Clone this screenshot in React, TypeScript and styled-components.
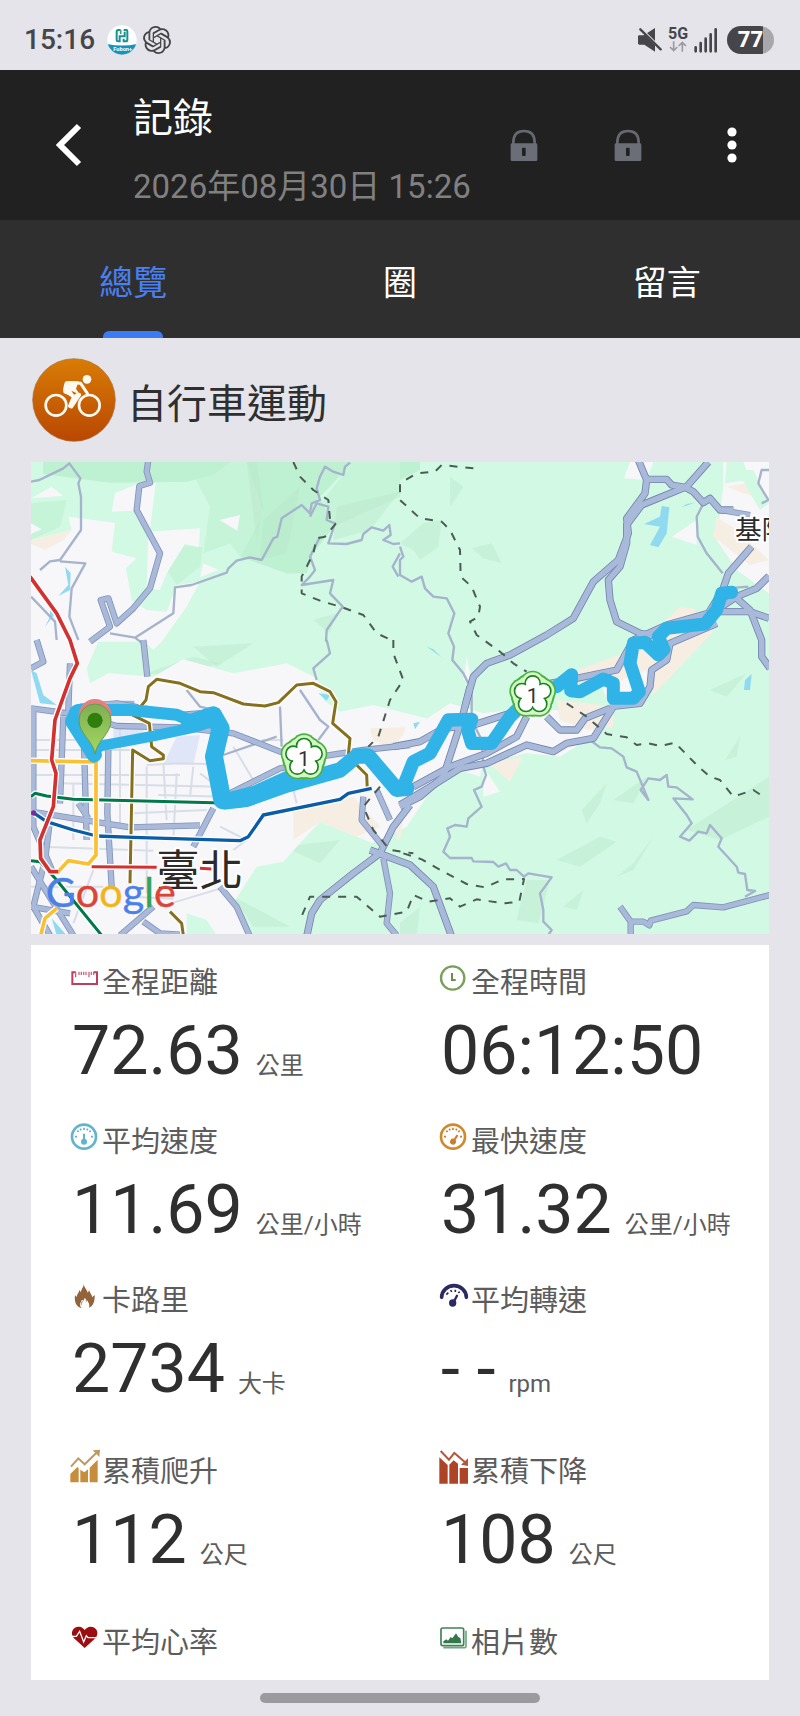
import React, { useState } from "react";
import styled, { createGlobalStyle } from "styled-components";

const latin = `Roboto, "Noto Sans CJK TC", sans-serif`;
const cjk = `"Noto Sans CJK TC", Roboto, sans-serif`;

const GlobalStyle = createGlobalStyle`
  *, *::before, *::after { box-sizing: border-box; }
  body { margin: 0; background: #e5e4ea; font-family: ${latin}; color: #2f2f2f; }
  button { border: 0; padding: 0; margin: 0; background: none; font: inherit; color: inherit; cursor: pointer; }
  svg { display: block; flex: none; }
  h1, h2, p, dl, dt, dd { margin: 0; font-weight: 400; }
`;

const Page = styled.div`
  min-height: 100vh;
  display: flex;
  flex-direction: column;
`;

/* ---------- status bar ---------- */

const StatusBar = styled.div`
  display: flex;
  align-items: center;
  justify-content: space-between;
  height: 70px;
  padding: 9px 26px 0 24px;
  color: #46464a;
`;

const StatusGroup = styled.div<{ $gap: number }>`
  display: flex;
  align-items: center;
  gap: ${(p) => p.$gap}px;
`;

const Clock = styled.time`
  font-size: 28px;
  line-height: 32px;
  font-weight: 500;
  margin-right: 6px;
`;

const Network = styled.div`
  display: flex;
  flex-direction: column;
  align-items: center;
  width: 22px;
  font-size: 16px;
  line-height: 14px;
  font-weight: 700;
`;

const Battery = styled.div`
  width: 47px;
  height: 28px;
  margin-left: 4px;
  border-radius: 14px;
  background: linear-gradient(90deg, #46464a 77%, #a8a7ac 77%);
  color: #fff;
  font-size: 22px;
  line-height: 28px;
  font-weight: 800;
  text-align: center;
`;

/* ---------- header ---------- */

const Header = styled.header`
  display: flex;
  align-items: center;
  height: 150px;
  padding-right: 16px;
  background: #212121;
  color: #fff;
`;

const BackButton = styled.button`
  display: grid;
  place-items: center;
  width: 133px;
  height: 100px;
  padding-left: 4px;
`;

const Titles = styled.div`
  flex: 1;
  display: flex;
  flex-direction: column;
  gap: 27px;
  padding-top: 7px;
  white-space: nowrap;
`;

const Title = styled.h1`
  font: 400 40px/50px ${cjk};
`;

const Stamp = styled.p`
  font-size: 33px;
  line-height: 40px;
  color: #808080;
`;

const ActionButton = styled.button`
  display: grid;
  place-items: center;
  width: 104px;
  height: 64px;
`;

/* ---------- tabs ---------- */

const Tabs = styled.nav`
  display: flex;
  height: 118px;
  background: #2f2f2f;
`;

const Tab = styled.button<{ $active: boolean }>`
  flex: 1;
  display: flex;
  flex-direction: column;
  align-items: center;
  justify-content: space-between;
  padding-top: 36px;
  font: 400 34px/50px ${cjk};
  color: ${(p) => (p.$active ? "#4a7ff0" : "#fff")};

  &::after {
    content: "";
    width: 60px;
    height: 7px;
    border-radius: 6px 6px 0 0;
    background: ${(p) => (p.$active ? "#3b7cf6" : "transparent")};
  }
`;

/* ---------- content ---------- */

const Activity = styled.section`
  display: flex;
  align-items: center;
  gap: 11px;
  padding: 20px 32px;
`;

const ActivityName = styled.h2`
  padding-top: 2px;
  font: 400 40px/60px ${cjk};
`;

const Content = styled.main`
  flex: 1;
  display: flex;
  flex-direction: column;
  gap: 11px;
  padding: 0 31px;
`;

const MapFrame = styled.figure`
  margin: 0;
  overflow: hidden;

  svg { width: 100%; height: auto; }
`;

const Stats = styled.dl`
  flex: 1;
  display: grid;
  grid-template-columns: 1fr 1fr;
  align-content: start;
  padding: 15px 0 18px;
  background: #fff;
`;

const Stat = styled.div<{ $space: number }>`
  display: flex;
  flex-direction: column;
  gap: 11px;
  padding-left: 39px;
  margin-bottom: ${(p) => p.$space}px;
`;

const StatLabel = styled.dt`
  display: flex;
  align-items: center;
  gap: 2px;
  font: 400 29px/40px ${cjk};
  color: #5c5c5c;

  svg { overflow: visible; }
`;

const StatValue = styled.dd`
  display: flex;
  align-items: baseline;
  gap: 13px;
  height: 80px;
  padding-left: 2px;
  font-size: 68px;
  line-height: 80px;
  white-space: pre;
`;

const Unit = styled.span`
  font-size: 24px;
  line-height: 30px;
  color: #5c5c5c;
`;

const HomeBar = styled.div`
  width: 35%;
  height: 10px;
  margin: 13px auto;
  border-radius: 5px;
  background: #9b9a9f;
`;

/* ---------- status icons ---------- */

const FubonIcon = () => (
  <svg width="30" height="30" viewBox="0 0 90 90" aria-hidden="true">
    <clipPath id="fubon"><circle cx="45" cy="45" r="44" /></clipPath>
    <g clipPath="url(#fubon)">
      <rect width="90" height="90" fill="#fff" />
      <path d="M0 57Q45 66 90 57V90H0Z" fill="#1593bb" />
    </g>
    <path d="M41 15H34Q29 15 29 20V46Q29 49 34 49H38V34H53V20M50 15H58Q61 15 61 19V44Q61 49 56 49H50V41" fill="none" stroke="#17938f" strokeWidth="6" />
    <path d="M41 15V27" stroke="#2fa56f" strokeWidth="5" />
    <text x="47" y="78" fontSize="17" fontWeight="700" fill="#fff" textAnchor="middle" fontFamily="Roboto, sans-serif">Fubon+</text>
  </svg>
);

const KnotIcon = () => (
  <svg width="28" height="28" viewBox="0 0 24 24" fill="#46464a" aria-hidden="true">
    <path d="M22.2819 9.8211a5.9847 5.9847 0 0 0-.5157-4.9108 6.0462 6.0462 0 0 0-6.5098-2.9A6.0651 6.0651 0 0 0 4.9807 4.1818a5.9847 5.9847 0 0 0-3.9977 2.9 6.0462 6.0462 0 0 0 .7427 7.0966 5.98 5.98 0 0 0 .511 4.9107 6.051 6.051 0 0 0 6.5146 2.9001A5.9847 5.9847 0 0 0 13.2599 24a6.0557 6.0557 0 0 0 5.7718-4.2058 5.9894 5.9894 0 0 0 3.9977-2.9001 6.0557 6.0557 0 0 0-.7475-7.0729zm-9.022 12.6081a4.4755 4.4755 0 0 1-2.8764-1.0408l.1419-.0804 4.7783-2.7582a.7948.7948 0 0 0 .3927-.6813v-6.7369l2.02 1.1686a.071.071 0 0 1 .038.052v5.5826a4.504 4.504 0 0 1-4.4945 4.4944zm-9.6607-4.1254a4.4708 4.4708 0 0 1-.5346-3.0137l.142.0852 4.783 2.7582a.7712.7712 0 0 0 .7806 0l5.8428-3.3685v2.3324a.0804.0804 0 0 1-.0332.0615L9.74 19.9502a4.4992 4.4992 0 0 1-6.1408-1.6464zM2.3408 7.8956a4.485 4.485 0 0 1 2.3655-1.9728V11.6a.7664.7664 0 0 0 .3879.6765l5.8144 3.3543-2.0201 1.1685a.0757.0757 0 0 1-.071 0l-4.8303-2.7865A4.504 4.504 0 0 1 2.3408 7.872zm16.5963 3.8558L13.1038 8.364 15.1192 7.2a.0757.0757 0 0 1 .071 0l4.8303 2.7913a4.4944 4.4944 0 0 1-.6765 8.1042v-5.6772a.79.79 0 0 0-.407-.667zm2.0107-3.0231l-.142-.0852-4.7735-2.7818a.7759.7759 0 0 0-.7854 0L9.409 9.2297V6.8974a.0662.0662 0 0 1 .0284-.0615l4.8303-2.7866a4.4992 4.4992 0 0 1 6.6802 4.66zM8.3065 12.863l-2.02-1.1638a.0804.0804 0 0 1-.038-.0567V6.0742a4.4992 4.4992 0 0 1 7.3757-3.4537l-.142.0805L8.704 5.459a.7948.7948 0 0 0-.3927.6813zm1.0976-2.3654l2.602-1.4998 2.6069 1.4998v2.9994l-2.5974 1.4997-2.6067-1.4997Z" />
  </svg>
);

const MuteIcon = () => (
  <svg width="25" height="26" viewBox="702 78 75 78" aria-hidden="true">
    <path d="M705 106Q705 103 709 103H722L756 81V152L724 131H709Q705 131 705 127Z" fill="#46464a" />
    <path d="M706 76L782 152" stroke="#e5e4ea" strokeWidth="9" />
    <path d="M712 85L773 145" stroke="#46464a" strokeWidth="7" strokeLinecap="round" />
  </svg>
);

const DataArrows = () => (
  <svg width="18" height="11" viewBox="810 123 54 33" fill="none" stroke="#9c9ba0" strokeWidth="5" aria-hidden="true">
    <path d="M824 124V152M813 141L824 152L835 141M850 155V127M839 138L850 127L861 138" />
  </svg>
);

const SignalIcon = () => (
  <svg width="24" height="26" viewBox="884 78 72 78" stroke="#46464a" strokeWidth="8" strokeLinecap="round" aria-hidden="true">
    <path d="M889 139V151M904 126V151M919 113V151M934 100V151M949 85V151" />
  </svg>
);

/* ---------- header icons ---------- */

const BackIcon = () => (
  <svg width="26" height="44" viewBox="0 0 26 44" fill="none" stroke="#fff" strokeWidth="6" aria-hidden="true">
    <path d="M23 3L4 22L23 41" />
  </svg>
);

const LockIcon = () => (
  <svg width="28" height="32" viewBox="331 387 84 96" aria-hidden="true">
    <path d="M341 434V428Q341 393 373 393Q405 393 405 428V434" fill="none" stroke="#666970" strokeWidth="8" />
    <rect x="333" y="430" width="80" height="53" rx="4" fill="#6b6e76" />
    <rect x="367" y="443" width="11" height="25" rx="3" fill="#212121" />
  </svg>
);

const MoreIcon = () => (
  <svg width="10" height="36" viewBox="0 0 10 36" fill="#fff" aria-hidden="true">
    <circle cx="5" cy="5" r="4.6" />
    <circle cx="5" cy="18" r="4.6" />
    <circle cx="5" cy="31" r="4.6" />
  </svg>
);

const BikeIcon = () => (
  <svg width="84" height="84" viewBox="96 54 252 252" aria-hidden="true">
    <defs>
      <linearGradient id="bike" x1="0" y1="0" x2="0" y2="1">
        <stop offset="0" stopColor="#d87c06" />
        <stop offset="1" stopColor="#b94702" />
      </linearGradient>
    </defs>
    <circle cx="222" cy="180" r="124" fill="url(#bike)" stroke="#a9703a" strokeWidth="2" />
    <g fill="none" stroke="#fffaf0" strokeLinejoin="round" strokeLinecap="round">
      <circle cx="168" cy="196" r="31" strokeWidth="8" />
      <circle cx="268" cy="196" r="31" strokeWidth="8" />
      <path d="M204 128L242 130L262 160" strokeWidth="9" />
      <path d="M238 164L214 200" strokeWidth="11" />
      <path d="M200 154L222 170L210 198" strokeWidth="12" />
    </g>
    <path d="M198 124H236L228 146L240 164L228 174L192 160Q187 154 191 140Q193 126 198 124Z" fill="#fffaf0" />
    <path d="M214 152L230 160L222 164Z" fill="#c86005" />
    <circle cx="261" cy="118" r="13" fill="#fffaf0" />
  </svg>
);

/* ---------- stat icons ---------- */

const StatIcon = ({ children }: { children: React.ReactNode }) => (
  <svg width="30" height="36" viewBox="0 0 90 108" fill="none" aria-hidden="true">{children}</svg>
);

const RulerIcon = () => (
  <StatIcon>
    <path d="M17 31H7V66H81V31H71" stroke="#bd3f60" strokeWidth="6" />
    <path d="M17 29V46M27 29V39M34 29V39M41 29V39M48 29V39M57 29V46M64 29V39M71 29V39" stroke="#cf6482" strokeWidth="4" />
  </StatIcon>
);

const ClockIcon = () => (
  <StatIcon>
    <circle cx="41" cy="48" r="35" stroke="#7a9f59" strokeWidth="7" />
    <path d="M39 33V54H50" stroke="#6b8f4e" strokeWidth="6" />
  </StatIcon>
);

const GaugeIcon = ({ color, ring, angle }: { color: string; ring: string; angle: number }) => (
  <StatIcon>
    <circle cx="42" cy="47" r="36" stroke={ring} strokeWidth="8" />
    <path d="M15 47H21M63 47H69M22 29L26 33M62 29L58 33M42 20V27M31 23L33 28M53 23L51 28" stroke={color} strokeWidth="5" />
    <g transform={`rotate(${angle} 42 62)`}>
      <circle cx="42" cy="62" r="9" fill={color} />
      <path d="M42 62V38" stroke={color} strokeWidth="6" />
    </g>
  </StatIcon>
);

const FlameIcon = () => (
  <StatIcon>
    <path d="M42 7C39 21 51 28 53 38L58 30C58 39 67 43 66 52L74 45C75 66 68 80 57 83C60 73 55 68 52 61C51 67 49 69 48 71C49 64 46 58 43 55C42 65 34 67 34 78L32 72C31 77 32 81 35 84C20 82 12 68 15 46L21 51C20 42 27 39 28 30L33 37C33 27 43 20 42 7Z" fill="#93633a" />
    <path d="M33 80C29 70 35 66 37 60L41 68L45 56C49 62 50 68 49 74L54 70C56 76 54 80 51 83" stroke="#fff" strokeWidth="3" />
  </StatIcon>
);

const CadenceIcon = () => (
  <StatIcon>
    <path d="M8 52A37 35 0 0 1 82 52" stroke="#2b2a62" strokeWidth="11" strokeLinecap="round" />
    <path d="M22 44L28 38M35 30L38 36M49 29V36M62 35L58 39" stroke="#2b2a62" strokeWidth="5" />
    <path d="M42 70L54 47" stroke="#2b2a62" strokeWidth="7" strokeLinecap="round" />
    <circle cx="41" cy="69" r="11" fill="#2b2a62" />
  </StatIcon>
);

const AscentIcon = () => (
  <StatIcon>
    <path d="M1 69L22 48L26 52V94H1ZM31 56L43 64L54 55V94H31ZM59 50L83 26V94H59Z" fill="#c68d3c" />
    <path d="M3 47L25 22L44 40L78 7" stroke="#bd9a5e" strokeWidth="6" />
    <path d="M68 -2L90 -4L88 18Z" fill="#bd9a5e" />
  </StatIcon>
);

const DescentIcon = () => (
  <StatIcon>
    <path d="M1 19L26 42V98H1ZM31 41L44 28L57 38V98H31ZM62 51H87V98H62Z" fill="#ad4426" />
    <path d="M5 0L30 26L46 6L80 35" stroke="#b4573c" strokeWidth="6" />
    <path d="M87 22V45L66 41Z" fill="#b4573c" />
  </StatIcon>
);

const HeartIcon = () => (
  <StatIcon>
    <path d="M44 78L12 49C-2 32 10 13 27 14C36 14 41 20 44 24C47 20 53 14 62 14C79 14 90 32 76 49Z" fill="#9c0d12" />
    <path d="M5 43H19L29 28L41 60L49 41L54 47H84" stroke="#fff" strokeWidth="4" />
  </StatIcon>
);

const PhotosIcon = () => (
  <StatIcon>
    <path d="M13 77H77Q81 77 81 73V26" stroke="#6da881" strokeWidth="5" />
    <rect x="6" y="18" width="68" height="53" rx="5" stroke="#3f8456" strokeWidth="5" />
    <path d="M13 64V58L22 52L27 56L35 45L40 49L51 34L58 45L64 48L67 64Z" fill="#32784a" />
  </StatIcon>
);

/* ---------- map ---------- */

type SheetId = "nw" | "sw" | "ne" | "se";
type Shape = [SheetId, string];

const origins: Record<SheetId, string> = {
  nw: "translate(-93 -366)",
  sw: "translate(-33 534)",
  ne: "translate(1107 -36)",
  se: "translate(1107 684)",
};

const hills: Shape[] = [
  ["nw", "130,366 690,366 640,405 560,425 330,428 130,402"],
  ["nw", "740,366 1060,366 960,470 1000,560 940,640 920,700 860,700 720,650 790,520"],
  ["ne", "0,36 60,36 60,60 0,90"],
];

const slopes: Shape[] = [
  ["nw", "560,366 740,366 790,520 720,650 690,610 610,640 630,500"],
  ["nw", "93,490 200,480 180,560 93,600"],
  ["nw", "500,690 550,615 608,622 600,680 530,735"],
  ["nw", "1060,366 1200,366 1200,470 1000,560 970,480"],
];

const ridges: Shape[] = [
  ["nw", "1010,500 1200,455 1110,570 1000,600"],
  ["nw", "790,540 900,440 860,640 780,660"],
  ["nw", "740,366 770,366 790,500 770,600"],
  ["nw", "940,840 1010,820 990,880"],
  ["ne", "0,280 70,220 125,210 115,290 60,330 40,300"],
  ["ne", "150,80 190,110 150,170"],
  ["ne", "215,295 275,280 305,340 250,325"],
  ["ne", "930,720 1040,670 980,740"],
  ["sw", "380,100 520,50 600,70 480,110"],
  ["sw", "520,20 700,10 590,80"],
  ["sw", "790,620 960,600 900,670"],
  ["sw", "640,770 810,860 700,860"],
  ["se", "545,360 620,280 600,340 560,400"],
  ["se", "470,510 600,440 650,455 540,530"],
  ["se", "860,420 1107,260 1107,380 960,450"],
  ["se", "650,560 700,520 760,440 700,540"],
  ["se", "380,570 450,570 415,700 350,690"],
  ["se", "490,650 550,600 530,660"],
  ["se", "975,210 1020,140 1010,200"],
  ["se", "0,700 60,650 50,735 0,735"],
  ["se", "640,330 740,260 700,340"],
];

const urban: Shape[] = [
  ["nw", "93,600 215,570 205,530 345,548 335,635 410,655 378,685 395,780 440,810 500,815 530,735 600,725 560,800 485,905 93,905"],
  ["nw", "445,575 600,565 597,622 555,612 500,700 480,750 440,745"],
  ["nw", "93,475 155,440 190,468"],
  ["nw", "345,460 410,432 467,430 450,570 405,512 335,515"],
  ["nw", "658,540 720,525 712,572"],
  ["nw", "93,550 125,568 93,582"],
  ["nw", "610,670 655,690 600,712"],
  ["sw", "33,-5 240,-5 200,85 210,130 265,100 400,110 490,58 640,100 800,70 890,115 910,180 960,215 1060,195 1240,240 1240,440 1160,560 1060,610 1010,590 900,545 840,610 790,665 710,680 640,790 690,886 33,886"],
  ["sw", "370,0 430,0 400,30"],
  ["se", "-10,170 60,100 150,40 250,70 330,60 480,60 630,50 630,100 560,150 480,200 380,190 250,220 240,260 180,240 60,320 -10,380"],
  ["se", "250,230 300,305 250,320"],
  ["ne", "690,36 760,36 740,90 672,85"],
  ["ne", "970,36 1107,36 1107,430 1010,360 950,270 970,110"],
  ["ne", "815,260 890,210 890,285"],
  ["ne", "600,690 700,640 800,600 860,560 760,720 620,750"],
  ["ne", "190,690 200,620 215,690"],
];

const sand: Shape[] = [
  ["nw", "93,600 215,570 190,600 135,630 93,612"],
  ["sw", "820,500 1000,470 1080,560 1010,590 900,545 820,600"],
  ["sw", "1050,265 1160,262 1120,330 1060,300"],
  ["se", "-10,380 12,370 0,450 -10,450"],
  ["se", "265,220 370,200 330,275"],
  ["se", "470,30 560,40 640,50 640,110 560,120 480,90"],
  ["ne", "450,690 640,620 700,600 840,470 880,475 940,545 760,735 740,660 640,700"],
  ["ne", "980,110 1060,95 1107,150 1030,130"],
  ["ne", "950,200 1010,240 1107,330 1050,345 940,260"],
];

const parks: Shape[] = [
  ["ne", "980,36 1030,36 1050,90 975,100"],
  ["ne", "1010,60 1060,60 1107,160 1080,180"],
  ["sw", "500,820 560,840 590,886 500,886"],
];

const campus: Shape[] = [
  ["sw", "430,372 470,290 540,285 520,375"],
  ["sw", "280,250 370,250 370,300 280,310"],
];

const water: Shape[] = [
  ["ne", "785,168 808,172 800,250 775,292 750,285 780,230 732,222 780,200"],
  ["ne", "845,172 885,158 860,162"],
  ["ne", "1035,690 1055,672 1050,720 1032,720"],
  ["ne", "80,590 100,598 125,622"],
  ["nw", "195,680 212,700 210,750 175,768 205,735"],
  ["nw", "150,810 162,825 135,860 150,830"],
  ["sw", "33,90 50,100 70,165 110,195 60,190"],
  ["sw", "895,160 930,165 920,182"],
  ["sw", "95,835 140,886 110,886"],
  ["se", "40,100 60,95 45,118"],
];

const streets: Shape[] = [
  ["sw", "33,300 400,300"], ["sw", "33,330 330,330"], ["sw", "33,405 480,405"],
  ["sw", "120,430 600,440"], ["sw", "60,620 400,632"], ["sw", "200,240 200,480"],
  ["sw", "300,250 300,560"], ["sw", "380,380 380,760"], ["sw", "160,430 160,600"],
  ["sw", "430,370 440,540"], ["sw", "470,400 460,600"], ["sw", "340,520 560,510"],
  ["sw", "380,375 480,370 560,372"], ["sw", "520,380 510,470"], ["sw", "640,320 700,420"],
  ["sw", "415,465 620,470"], ["sw", "33,740 250,740"], ["sw", "220,690 160,850"],
  ["sw", "330,770 460,776"], ["sw", "540,400 620,460"], ["sw", "820,450 830,490"],
  ["sw", "600,560 680,600 640,630"], ["sw", "725,300 790,300"], ["sw", "420,800 620,740"],
];

const lanes: Shape[] = [
  ["nw", "93,425 118,420 190,385 208,370 241,415 235,430 243,470 243,570 180,660 150,664 120,690"],
  ["nw", "180,664 256,670 215,745 208,830 235,900"],
  ["nw", "93,770 165,845 170,900"],
  ["nw", "330,880 405,893 520,820 525,742 575,735 680,698 685,685 710,662 750,652 785,660 820,595 832,590 845,535 905,495 930,520 935,490 960,480 950,445 960,410 975,380 1000,395 1030,405 1035,380 1050,368"],
  ["nw", "405,893 440,920"],
  ["nw", "930,530 950,490 985,500 980,540 1005,550 985,610 1040,612 1085,600 1090,582 1115,562 1150,572 1168,555 1172,585 1150,600 1180,612 1200,610"],
  ["nw", "1200,640 1178,680 1195,710"],
  ["nw", "960,590 930,650 945,690 930,710 905,735 1000,720 990,760 1028,800 980,870 978,905"],
  ["ne", "0,290 10,320 0,330 0,375 35,395 65,380 75,415 100,440 140,445 163,490 145,550 162,590 157,630 190,670 205,700"],
  ["ne", "1085,160 1105,150 1075,100 1085,60 1107,60"],
  ["ne", "908,165 890,200 893,260 920,310 968,370"],
  ["ne", "980,415 1045,410"],
  ["sw", "920,0 930,40 880,85 890,120"],
  ["sw", "780,200 785,320"], ["sw", "840,150 900,240 925,260 895,300"],
  ["sw", "500,150 540,200 600,215"], ["sw", "610,345 770,290"],
  ["se", "215,0 215,90 245,150 250,230 258,255 245,290 222,300 245,350 205,385 200,410 165,405 142,415 150,440 130,485 150,504 215,504 220,514 280,516 295,530 318,520 330,540 350,540 372,560 385,550 455,562 420,610 430,660 430,695 455,720 445,735"],
  ["se", "570,150 600,172 635,175 670,200 680,232 710,245 745,330 722,300 745,265 780,270 800,255 805,290 830,292 878,328 820,325 860,375 875,400 840,440 868,452 895,425 920,430 930,405 965,445 955,470 1010,530 1015,548 1035,552 1042,600 1065,603 1035,620"],
  ["sw", "285,186 340,186 340,215"],
];

const roads: Shape[] = [
  ["nw", "445,360 440,395 450,428 418,438 410,510 480,640 450,745 400,805 350,850 325,775 302,780 330,860 270,905"],
  ["sw", "33,205 180,225 290,258 480,262 640,280 780,335 900,350 1030,330 1170,315"],
  ["sw", "180,200 290,190 480,225 600,215"],
  ["sw", "610,470 780,385 850,370"],
  ["sw", "50,0 70,65 33,85"],
  ["sw", "40,200 40,560 100,700"], ["sw", "130,230 120,490"], ["sw", "190,240 200,600"],
  ["sw", "265,330 262,520 275,740"], ["sw", "33,515 330,562 540,556"],
  ["sw", "580,505 520,620"], ["sw", "150,70 145,210 180,240"],
  ["sw", "90,540 75,660 40,800 90,886"], ["sw", "33,680 160,886"], ["sw", "33,800 150,820"],
  ["sw", "175,490 205,535"], ["sw", "300,886 400,800"], ["sw", "370,845 420,880 480,884"],
  ["sw", "600,740 650,800 690,890"], ["sw", "370,0 382,110"],
  ["sw", "1070,450 1110,540"], ["sw", "1030,470 1025,540 1090,620"],
  ["sw", "1090,655 1110,760 1100,850 1130,886"],
  ["se", "660,650 692,695 692,740"],
  ["se", "692,695 730,695 748,706 752,692 860,664 880,645 970,652 1110,615"],
  ["ne", "960,180 1050,195"],
];

const highways: Shape[] = [
  ["ne", "715,30 740,90 735,130 680,205 685,250 655,330 580,395 520,505 440,555 330,615 260,640 220,680 195,770"],
  ["ne", "925,36 860,110 725,165 680,225 680,280 660,350 625,390 630,450 650,515 720,550 780,560"],
  ["ne", "740,88 800,88 815,105 855,112 880,125 910,158 930,145 960,180 1000,180"],
  ["ne", "1055,290 985,370 968,420 925,490 800,525 700,570 650,660 530,685 450,700"],
  ["ne", "940,485 1050,485 1107,505"],
  ["ne", "1107,378 1070,415 1010,440 950,480"],
  ["ne", "1010,445 1050,480 1085,570 1085,620 1110,655"],
  ["ne", "950,520 880,550 810,580 800,630 755,660 750,710 720,760 630,770"],
  ["se", "210,-10 185,90 130,260 60,320 0,350"],
  ["se", "-20,170 60,155 130,115 220,105 330,70"],
  ["se", "440,80 480,120 530,120 555,85 630,55"],
  ["se", "0,345 100,285 180,235 260,220 380,165 460,185 500,160 580,145 640,50"],
  ["se", "40,290 150,230 260,190 350,140 380,80"],
  ["se", "-90,480 -50,495 30,525 100,590 155,740"],
  ["sw", "1170,495 1120,560 1080,640 1000,700 900,780 875,820 860,890"],
];

const borders: Shape[] = [
  ["nw", "880,366 900,410 940,450 985,480 990,540 1008,550 975,590 950,595 940,640 905,710 905,760 960,782 1030,803 1090,825 1130,880 1185,905"],
  ["sw", "1120,0 1120,40 1150,120 1110,180 1075,290 1045,320"],
  ["sw", "1080,440 1030,500 1060,570 1110,630 1180,640"],
  ["ne", "220,55 125,45 105,65 50,70 0,100 0,150 60,205 125,215 150,240 180,300 182,380 215,410 240,470 235,500 210,515 230,555 300,605 340,640 380,665"],
  ["se", "500,40 560,80 620,132 680,142 710,165 745,160 780,168 825,158 895,230 930,260 960,270 1000,320 1060,300 1090,320"],
  ["se", "10,490 65,508 130,545 200,582 255,592 310,568 372,567 358,635 310,640 230,628 180,650 150,625 85,635 40,615 20,665 -60,680 -130,620 -270,620 -300,690"],
];

const metro: [string, string, number][] = [
  ["#86701f", "330,730 338,330 390,362 430,356 430,345 395,320 388,250 340,226 378,180 385,140 410,118 480,130 540,155 580,158 670,192 735,198 775,188 830,135 880,130 930,155 948,185 938,250 990,295 985,345 1010,375 1040,405 1042,450", 9],
  ["#86701f", "450,815 485,850 490,886", 9],
  ["#00784a", "33,470 45,460 80,468 160,478 580,488 665,498", 9],
  ["#00784a", "33,662 60,665 110,720 245,886", 9],
  ["#0a5ca6", "40,518 80,545 160,570 230,588 340,592 660,602 685,590 730,525 960,478 985,460 1055,445", 10],
  ["#fbbf33", "33,362 228,366 228,645 205,672 145,662 110,700", 11],
  ["#fbbf33", "62,886 75,835 110,805", 11],
  ["#d3312f", "30,-190 110,-80 150,0 172,70 150,115 105,240 95,360 108,400 100,500 60,600 62,655 90,695 115,695", 11],
  ["#d3312f", "215,680 410,682", 9],
  ["#d3312f", "540,685 575,687", 9],
];

const route: [SheetId, string, number][] = [
  ["sw", "228,345 165,245 175,210 330,210 470,224 530,250", 36],
  ["sw", "215,345 240,318 400,288 530,260 590,240", 32],
  ["sw", "510,250 580,226 602,265 582,350 607,480", 54],
  ["sw", "615,486 680,478 800,435 960,390 1010,348 1045,348 1130,448 1160,445", 46],
  ["sw", "600,475 700,450 800,405 900,380", 24],
  ["sw", "168,215 155,245 190,300 222,348", 40],
  ["se", "-10,295 10,290 40,215 90,190 145,90 215,88 203,120 215,160 275,160 330,80 380,30", 40],
  ["ne", "470,710 515,674 512,722 540,725 610,687 640,700 640,745 700,745 718,725 690,640 700,580 735,577 775,615 792,598 775,560 800,535 915,522 950,480 965,430 995,427", 39],
];

const Polys = ({ items, fill }: { items: Shape[]; fill: string }) => (
  <g fill={fill}>
    {items.map(([sheet, points], i) => <polygon key={i} transform={origins[sheet]} points={points} />)}
  </g>
);

const Lines = ({ items, stroke, width, dash }: { items: Shape[]; stroke: string; width: number; dash?: string }) => (
  <g fill="none" stroke={stroke} strokeWidth={width} strokeLinejoin="round" strokeDasharray={dash}>
    {items.map(([sheet, points], i) => <polyline key={i} transform={origins[sheet]} points={points} />)}
  </g>
);

const petals = [0, 72, 144, 216, 288].map((deg) => {
  const a = ((deg - 90) * Math.PI) / 180;
  return [Math.round(34 * Math.cos(a)), Math.round(34 * Math.sin(a))];
});

/* Highway marker: rings from the outside in, each a core disc with five petals. */
const rings = [
  { petal: 38, core: 66, fill: "#4cb045" },
  { petal: 33, core: 60, fill: "#d3f7c3" },
  { petal: 25, core: 40, fill: "#1b8322" },
  { petal: 20, core: 34, fill: "#fff" },
];

const Shield = ({ x, y }: { x: number; y: number }) => (
  <g transform={`translate(${x} ${y})`}>
    {rings.map(({ petal, core, fill }) => (
      <g key={fill} fill={fill}>
        <circle r={core} />
        {petals.map(([cx, cy], i) => <circle key={i} cx={cx} cy={cy} r={petal} />)}
      </g>
    ))}
    <text y="25" fontSize="63" textAnchor="middle" fill="#333" fontFamily="Roboto, sans-serif">1</text>
  </g>
);

const RouteMap = () => (
  <svg viewBox="0 0 2214 1416" role="img" aria-label="路線地圖">
    <defs>
      <linearGradient id="pin" x1="0" y1="0" x2="0" y2="1">
        <stop offset="0" stopColor="#7fae55" />
        <stop offset="1" stopColor="#a3d860" />
      </linearGradient>
    </defs>
    <rect width="2214" height="1416" fill="#d1f9e3" />
    <Polys items={slopes} fill="#c6f4d8" />
    <Polys items={hills} fill="#bdf1d1" />
    <Polys items={ridges} fill="#b9e6cb66" />
    <Polys items={urban} fill="#f7f7f9" />
    <Polys items={sand} fill="#f6eee2" />
    <Polys items={parks} fill="#d1f9e3" />
    <Polys items={campus} fill="#dfe6f7" />
    <Polys items={water} fill="#8fdaf0" />
    <Lines items={streets} stroke="#d9dde8" width={6} />
    <Lines items={lanes} stroke="#a5b3cc" width={7} />
    <Lines items={roads} stroke="#8394b8" width={19} />
    <Lines items={highways} stroke="#7385ad" width={22} />
    <Lines items={roads} stroke="#a9b9da" width={14} />
    <Lines items={highways} stroke="#a9b9da" width={17} />
    <Lines items={borders} stroke="#4c5c55" width={6} dash="24 24" />
    <g transform={origins.sw} fill="none" strokeLinejoin="round">
      {metro.map(([color, points, width], i) => (
        <g key={i}>
          <polyline points={points} stroke="#fff" strokeWidth={width + 8} />
          <polyline points={points} stroke={color} strokeWidth={width} />
        </g>
      ))}
      <circle cx="41" cy="519" r="8" fill="#7b2a9b" />
    </g>
    <g fill="none" stroke="#30b3e7" strokeLinejoin="round" strokeLinecap="round">
      {route.map(([sheet, points, width], i) => (
        <polyline key={i} transform={origins[sheet]} points={points} strokeWidth={width} />
      ))}
    </g>
    <g fontFamily={`"Noto Sans CJK TC", sans-serif`} fill="#2b2b2b" stroke="#fff" strokeWidth="12" strokeLinejoin="round" paintOrder="stroke">
      <text x="376" y="1272" fontSize="130">臺北</text>
      <text x="2112" y="232" fontSize="80">基隆</text>
    </g>
    <Shield x={819} y={886} />
    <Shield x={1505} y={698} />
    <g transform={origins.sw}>
      <path d="M225 325C215 285 176 265 176 225A49 48 0 0 1 274 225C274 265 235 285 225 325Z" fill="#e58080" />
      <path d="M225 342C218 300 177 282 177 240A48 48 0 0 1 273 240C273 282 232 300 225 342Z" fill="url(#pin)" stroke="#6b9a48" strokeWidth="3" />
      <circle cx="225" cy="241" r="23" fill="#2f7f0d" />
    </g>
    <text x="44" y="1336" fontSize="124" fontFamily="Lato, sans-serif">
      {[["G", "#4a80e8"], ["o", "#dc4437"], ["o", "#f2b41c"], ["g", "#4a80e8"], ["l", "#35a255"], ["e", "#dc4437"]].map(([ch, color], i) => (
        <tspan key={i} fill={color} stroke={color} strokeWidth="1">{ch}</tspan>
      ))}
    </text>
  </svg>
);

/* ---------- page ---------- */

const tabs = ["總覽", "圈", "留言"];

const stats = [
  { label: "全程距離", value: "72.63", unit: "公里", icon: <RulerIcon />, space: 28 },
  { label: "全程時間", value: "06:12:50", icon: <ClockIcon />, space: 28 },
  { label: "平均速度", value: "11.69", unit: "公里/小時", icon: <GaugeIcon color="#5fb3cc" ring="#62b4cd" angle={0} />, space: 28 },
  { label: "最快速度", value: "31.32", unit: "公里/小時", icon: <GaugeIcon color="#cf7a2c" ring="#cf8a2e" angle={35} />, space: 28 },
  { label: "卡路里", value: "2734", unit: "大卡", icon: <FlameIcon />, space: 40 },
  { label: "平均轉速", value: "- -", unit: "rpm", icon: <CadenceIcon />, space: 40 },
  { label: "累積爬升", value: "112", unit: "公尺", icon: <AscentIcon />, space: 40 },
  { label: "累積下降", value: "108", unit: "公尺", icon: <DescentIcon />, space: 40 },
  { label: "平均心率", icon: <HeartIcon />, space: 0 },
  { label: "相片數", icon: <PhotosIcon />, space: 0 },
];

export default function App() {
  const [active, setActive] = useState(0);

  return (
    <Page>
      <GlobalStyle />
      <StatusBar>
        <StatusGroup $gap={6}>
          <Clock>15:16</Clock>
          <FubonIcon />
          <KnotIcon />
        </StatusGroup>
        <StatusGroup $gap={5}>
          <MuteIcon />
          <Network>
            5G
            <DataArrows />
          </Network>
          <SignalIcon />
          <Battery>77</Battery>
        </StatusGroup>
      </StatusBar>

      <Header>
        <BackButton aria-label="返回"><BackIcon /></BackButton>
        <Titles>
          <Title>記錄</Title>
          <Stamp>2026年08月30日 15:26</Stamp>
        </Titles>
        <ActionButton aria-label="隱私"><LockIcon /></ActionButton>
        <ActionButton aria-label="鎖定"><LockIcon /></ActionButton>
        <ActionButton aria-label="更多"><MoreIcon /></ActionButton>
      </Header>

      <Tabs>
        {tabs.map((name, i) => (
          <Tab key={name} $active={i === active} aria-pressed={i === active} onClick={() => setActive(i)}>
            {name}
          </Tab>
        ))}
      </Tabs>

      <Activity>
        <BikeIcon />
        <ActivityName>自行車運動</ActivityName>
      </Activity>

      <Content>
        <MapFrame><RouteMap /></MapFrame>
        <Stats>
          {stats.map((s) => (
            <Stat key={s.label} $space={s.space}>
              <StatLabel>{s.icon}{s.label}</StatLabel>
              {s.value && (
                <StatValue>
                  {s.value}
                  {s.unit && <Unit>{s.unit}</Unit>}
                </StatValue>
              )}
            </Stat>
          ))}
        </Stats>
      </Content>
      <HomeBar />
    </Page>
  );
}
